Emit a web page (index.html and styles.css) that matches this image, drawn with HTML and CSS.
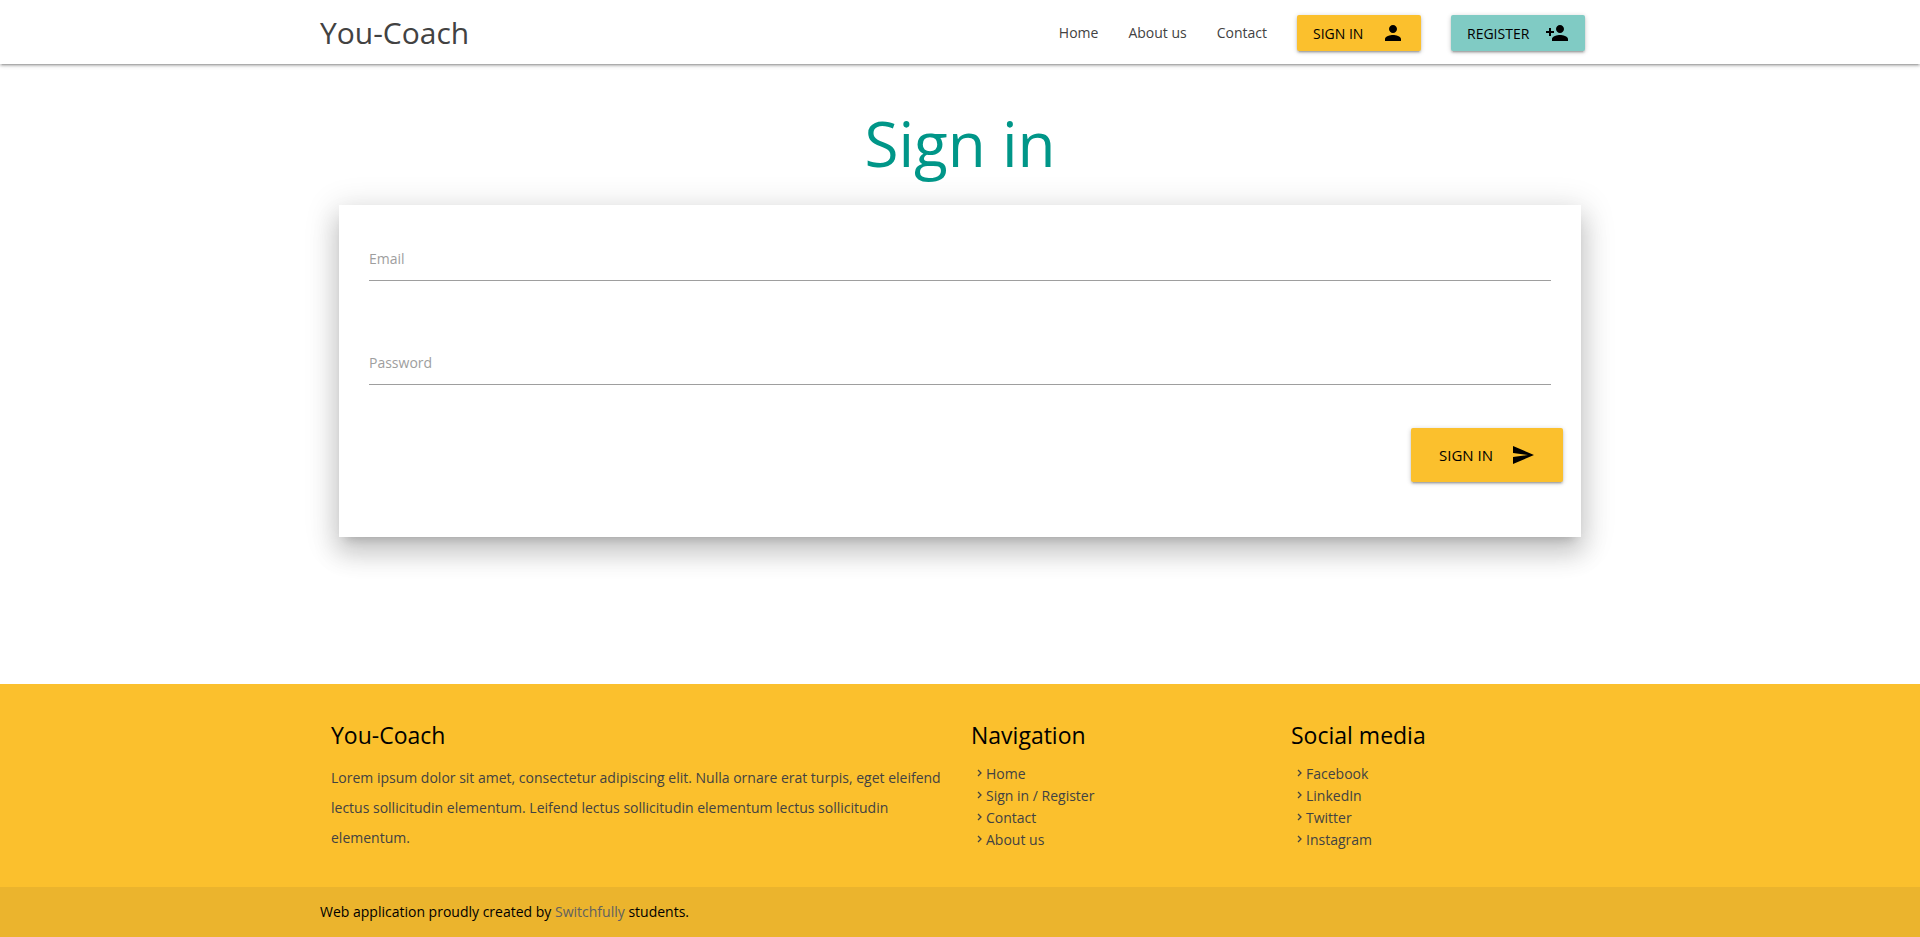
FILE: index.html
```html
<!DOCTYPE html>
<html lang="en">
<head>
<meta charset="utf-8">
<meta name="viewport" content="width=device-width, initial-scale=1">
<title>You-Coach</title>
<link rel="stylesheet" href="styles.css">
</head>
<body>
<header class="navbar">
  <div class="container navbar-inner">
    <a href="#" class="brand">You-Coach</a>
    <nav class="nav-links">
      <a href="#" class="nav-link">Home</a>
      <a href="#" class="nav-link">About us</a>
      <a href="#" class="nav-link">Contact</a>
      <button type="button" class="btn btn-signin">Sign in
        <svg class="icon" viewBox="0 0 24 24" aria-hidden="true"><path d="M12 12c2.210 0 4-1.790 4-4s-1.790-4-4-4-4 1.790-4 4 1.790 4 4 4zm0 2c-2.670 0-8 1.340-8 4v2h16v-2c0-2.660-5.330-4-8-4z"/></svg>
      </button>
      <button type="button" class="btn btn-register">Register
        <svg class="icon" viewBox="0 0 24 24" aria-hidden="true"><path d="M15 12c2.210 0 4-1.790 4-4s-1.790-4-4-4-4 1.790-4 4 1.790 4 4 4zm-9-2V7H4v3H1v2h3v3h2v-3h3v-2H6zm9 4c-2.670 0-8 1.340-8 4v2h16v-2c0-2.660-5.330-4-8-4z"/></svg>
      </button>
    </nav>
  </div>
</header>

<main class="container main">
  <h1 class="title">Sign in</h1>
  <form class="card">
    <div class="field">
      <input type="email" id="email" class="field-input">
      <label for="email" class="field-label">Email</label>
    </div>
    <div class="field">
      <input type="password" id="password" class="field-input">
      <label for="password" class="field-label">Password</label>
    </div>
    <div class="actions">
      <button type="submit" class="btn btn-large">Sign in
        <svg class="icon" viewBox="0 0 24 24" aria-hidden="true"><path d="M2.010 21L23 12 2.010 3 2 10l15 2-15 2z"/></svg>
      </button>
    </div>
  </form>
</main>

<footer class="footer">
  <div class="container footer-grid">
    <section class="footer-col">
      <h2 class="footer-title">You-Coach</h2>
      <p class="footer-text">Lorem ipsum dolor sit amet, consectetur adipiscing elit. Nulla ornare erat turpis, eget eleifend lectus sollicitudin elementum. Leifend lectus sollicitudin elementum lectus sollicitudin elementum.</p>
    </section>
    <section class="footer-col">
      <h2 class="footer-title">Navigation</h2>
      <ul class="footer-list">
        <li><a href="#"><svg class="chevron" viewBox="0 0 12 12" aria-hidden="true"><path d="M4 2l3 3-3 3"/></svg>Home</a></li>
        <li><a href="#"><svg class="chevron" viewBox="0 0 12 12" aria-hidden="true"><path d="M4 2l3 3-3 3"/></svg>Sign in / Register</a></li>
        <li><a href="#"><svg class="chevron" viewBox="0 0 12 12" aria-hidden="true"><path d="M4 2l3 3-3 3"/></svg>Contact</a></li>
        <li><a href="#"><svg class="chevron" viewBox="0 0 12 12" aria-hidden="true"><path d="M4 2l3 3-3 3"/></svg>About us</a></li>
      </ul>
    </section>
    <section class="footer-col">
      <h2 class="footer-title">Social media</h2>
      <ul class="footer-list">
        <li><a href="#"><svg class="chevron" viewBox="0 0 12 12" aria-hidden="true"><path d="M4 2l3 3-3 3"/></svg>Facebook</a></li>
        <li><a href="#"><svg class="chevron" viewBox="0 0 12 12" aria-hidden="true"><path d="M4 2l3 3-3 3"/></svg>LinkedIn</a></li>
        <li><a href="#"><svg class="chevron" viewBox="0 0 12 12" aria-hidden="true"><path d="M4 2l3 3-3 3"/></svg>Twitter</a></li>
        <li><a href="#"><svg class="chevron" viewBox="0 0 12 12" aria-hidden="true"><path d="M4 2l3 3-3 3"/></svg>Instagram</a></li>
      </ul>
    </section>
  </div>
  <div class="copyright">
    <div class="container">Web application proudly created by <a href="#">Switchfully</a> students.</div>
  </div>
</footer>
</body>
</html>
```
FILE: styles.css
```css
* { box-sizing: border-box; }

body {
  margin: 0;
  min-height: 100vh;
  display: flex;
  flex-direction: column;
  background: #fff;
  color: #000;
  font-family: "Open Sans", "Noto Sans", sans-serif;
  font-size: 14px;
  line-height: 22px;
}

a { color: inherit; text-decoration: none; }

.container {
  width: 90%;
  max-width: 1280px;
  margin: 0 auto;
}

.navbar {
  box-shadow: 0 2px 2px 0 rgba(0, 0, 0, .14), 0 3px 1px -2px rgba(0, 0, 0, .12), 0 1px 5px 0 rgba(0, 0, 0, .2);
}

.navbar-inner {
  display: flex;
  flex-wrap: wrap;
  align-items: center;
  justify-content: space-between;
  min-height: 64px;
  padding-top: 2px;
}

.brand { color: #424242; font-size: 30px; line-height: 62px; }

.nav-links {
  display: flex;
  flex-wrap: wrap;
  align-items: center;
  gap: 30px;
  padding: 0 15px;
}

.nav-link { color: #424242; }

.btn {
  display: inline-flex;
  align-items: center;
  justify-content: space-between;
  height: 36px;
  padding: 0 16px;
  border: 0;
  border-radius: 2px;
  background: #fbc02d;
  color: #000;
  font-family: inherit;
  font-size: 14px;
  text-transform: uppercase;
  cursor: pointer;
  box-shadow: 0 2px 2px 0 rgba(0, 0, 0, .14), 0 3px 1px -2px rgba(0, 0, 0, .12), 0 1px 5px 0 rgba(0, 0, 0, .2);
}

.btn-signin { min-width: 124px; }
.btn-register { min-width: 134px; background: #80cbc4; }

.btn-large {
  min-width: 152px;
  height: 54px;
  padding: 0 28px;
  font-size: 15px;
}

.icon { width: 24px; height: 24px; flex: none; fill: currentColor; }

.main { flex: 1 0 auto; padding: 0 19px 60px; }

.title {
  margin: 42px 0 25px;
  color: #009688;
  font-size: 62px;
  font-weight: 400;
  line-height: 74px;
  text-align: center;
}

.card {
  padding: 30px 18px 55px 30px;
  box-shadow: 0 16px 24px 2px rgba(0, 0, 0, .14), 0 6px 30px 5px rgba(0, 0, 0, .12), 0 8px 10px -7px rgba(0, 0, 0, .2);
}

.field { position: relative; margin: 0 12px 58px 0; }

.field-input {
  display: block;
  width: 100%;
  height: 46px;
  padding: 0;
  border: 0;
  border-bottom: 1px solid #9e9e9e;
  outline: 0;
  background: transparent;
  font: inherit;
}

.field-label {
  position: absolute;
  top: 13px;
  left: 0;
  color: #9e9e9e;
  cursor: text;
}

.actions { display: flex; justify-content: flex-end; margin-top: -15px; }

.footer { background: #fbc02d; }

.footer-grid {
  display: grid;
  grid-template-columns: 2fr 1fr 1fr;
  padding: 35px 0 34px;
}

.footer-col { padding: 0 11px; }

.footer-title {
  margin: 0 0 12px;
  font-size: 23px;
  font-weight: 400;
  line-height: 32px;
}

.footer-text { margin: 0; color: #424242; line-height: 30px; }

.footer-list {
  margin: 0;
  padding: 0 0 0 3px;
  list-style: none;
  color: #424242;
}

.footer-list a { display: flex; align-items: center; }

.chevron {
  width: 12px;
  height: 12px;
  fill: none;
  stroke: currentColor;
  stroke-width: 1.3;
}

.copyright { background: #ebb42d; line-height: 50px; }
.copyright a { color: #616161; }
```
